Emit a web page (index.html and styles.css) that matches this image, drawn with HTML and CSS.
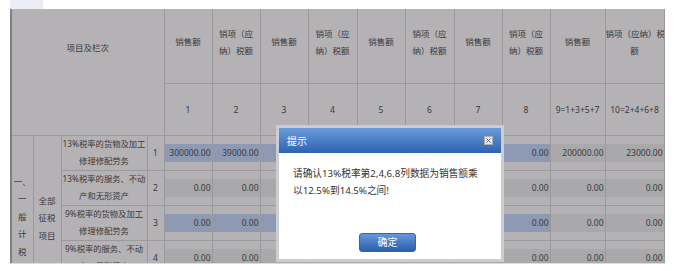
FILE: index.html
```html
<!DOCTYPE html>
<html lang="zh-CN">
<head>
<meta charset="utf-8">
<title>提示</title>
<link rel="stylesheet" href="styles.css">
</head>
<body>
<div class="tabs"><span class="tab"></span></div>
<div class="frame">
  <table class="grid">
    <colgroup>
      <col class="w-a"><col class="w-b"><col class="w-c"><col class="w-d">
      <col class="w48"><col class="w48"><col class="w48"><col class="w49">
      <col class="w48"><col class="w49"><col class="w48"><col class="w48">
      <col class="w55"><col class="w59">
    </colgroup>
    <thead>
      <tr class="hrow">
        <th colspan="4" rowspan="2" class="title-cell">项目及栏次</th>
        <th>销售额</th>
        <th>销项（应<br>纳）税额</th>
        <th>销售额</th>
        <th>销项（应<br>纳）税额</th>
        <th>销售额</th>
        <th>销项（应<br>纳）税额</th>
        <th>销售额</th>
        <th>销项（应<br>纳）税额</th>
        <th>销售额</th>
        <th>销项（应纳）税<br>额</th>
      </tr>
      <tr class="nrow">
        <td>1</td><td>2</td><td>3</td><td>4</td><td>5</td><td>6</td><td>7</td><td>8</td>
        <td>9=1+3+5+7</td><td>10=2+4+6+8</td>
      </tr>
    </thead>
    <tbody>
      <tr class="drow">
        <td rowspan="4" class="cat">一、<br>一<br>般<br>计<br>税</td>
        <td rowspan="4" class="sub">全部<br>征税<br>项目</td>
        <td class="item">13%税率的货物及加工<br>修理修配劳务</td>
        <td class="no">1</td>
        <td class="val"><div class="box blue">300000.00</div></td>
        <td class="val"><div class="box blue">39000.00</div></td>
        <td class="val"><div class="box blue"></div></td>
        <td class="val"><div class="box blue"></div></td>
        <td class="val"><div class="box blue"></div></td>
        <td class="val"><div class="box blue"></div></td>
        <td class="val"><div class="box blue"></div></td>
        <td class="val"><div class="box blue">0.00</div></td>
        <td class="val"><div class="box">200000.00</div></td>
        <td class="val"><div class="box">23000.00</div></td>
      </tr>
      <tr class="drow">
        <td class="item">13%税率的服务、不动<br>产和无形资产</td>
        <td class="no">2</td>
        <td class="val"><div class="box">0.00</div></td>
        <td class="val"><div class="box">0.00</div></td>
        <td class="val"><div class="box"></div></td>
        <td class="val"><div class="box"></div></td>
        <td class="val"><div class="box"></div></td>
        <td class="val"><div class="box"></div></td>
        <td class="val"><div class="box"></div></td>
        <td class="val"><div class="box">0.00</div></td>
        <td class="val"><div class="box">0.00</div></td>
        <td class="val"><div class="box">0.00</div></td>
      </tr>
      <tr class="drow">
        <td class="item">9%税率的货物及加工<br>修理修配劳务</td>
        <td class="no">3</td>
        <td class="val"><div class="box blue">0.00</div></td>
        <td class="val"><div class="box blue">0.00</div></td>
        <td class="val"><div class="box blue"></div></td>
        <td class="val"><div class="box blue"></div></td>
        <td class="val"><div class="box blue"></div></td>
        <td class="val"><div class="box blue"></div></td>
        <td class="val"><div class="box blue"></div></td>
        <td class="val"><div class="box blue">0.00</div></td>
        <td class="val"><div class="box">0.00</div></td>
        <td class="val"><div class="box">0.00</div></td>
      </tr>
      <tr class="drow">
        <td class="item">9%税率的服务、不动<br>产、无形资产</td>
        <td class="no">4</td>
        <td class="val"><div class="box">0.00</div></td>
        <td class="val"><div class="box">0.00</div></td>
        <td class="val"><div class="box"></div></td>
        <td class="val"><div class="box"></div></td>
        <td class="val"><div class="box"></div></td>
        <td class="val"><div class="box"></div></td>
        <td class="val"><div class="box"></div></td>
        <td class="val"><div class="box">0.00</div></td>
        <td class="val"><div class="box">0.00</div></td>
        <td class="val"><div class="box">0.00</div></td>
      </tr>
    </tbody>
  </table>

  <div class="dialog">
    <div class="dialog-title">
      <span>提示</span>
      <svg class="close" width="9" height="9" viewBox="0 0 9 9">
        <rect x="0.5" y="0.5" width="8" height="8" fill="#e4e6ea" stroke="#a9aeb8"/>
        <path d="M2.5 2.5 L6.5 6.5 M6.5 2.5 L2.5 6.5" stroke="#6b6f78" stroke-width="1"/>
      </svg>
    </div>
    <div class="dialog-body">
      <p class="msg">请确认13%税率第2,4,6.8列数据为销售额乘<br>以12.5%到14.5%之间!</p>
      <div class="footer"><button class="ok">确定</button></div>
    </div>
  </div>
</div>
</body>
</html>
```

FILE: styles.css
```css
* { box-sizing: border-box; }

body {
  margin: 0;
  background: #ffffff;
  font-family: "Noto Sans", "Noto Sans CJK SC", sans-serif;
}

.tabs {
  display: flex;
  height: 9px;
  padding-left: 10px;
}

.tab {
  width: 33px;
  background: #ececf5;
}

.frame {
  position: relative;
  width: 655px;
  height: 255px;
  margin-left: 10px;
  overflow: hidden;
  border-bottom: 1px solid #dcdcdc;
}

.grid {
  border-collapse: collapse;
  table-layout: fixed;
  width: 654px;
  background: #b4b2b4;
  color: #3a393b;
  font-size: 8.5px;
  border-left: 2px solid #807f81;
}

.w-a { width: 22px; }
.w-b { width: 28px; }
.w-c { width: 86px; }
.w-d { width: 17px; }
.w48 { width: 48px; }
.w49 { width: 49px; }
.w55 { width: 55px; }
.w59 { width: 59px; }

.grid th,
.grid td {
  border: 1px solid #9b999c;
  padding: 0;
  text-align: center;
  font-weight: normal;
  overflow: hidden;
  white-space: nowrap;
}

.hrow th {
  border-top: none;
  height: 74px;
  line-height: 17px;
  vertical-align: middle;
  padding-bottom: 8px;
}

.hrow th.title-cell {
  vertical-align: top;
  padding-top: 30px;
  padding-bottom: 0;
}

.nrow td {
  height: 52px;
  vertical-align: middle;
}

.drow td {
  height: 35px;
}

.cat,
.sub {
  vertical-align: top;
  line-height: 17.5px;
}

.cat { padding-top: 37px !important; }
.sub { padding-top: 56px !important; }

.item {
  font-size: 8.3px;
  line-height: 16.5px;
  vertical-align: middle;
}

.no { vertical-align: middle; }

.val { vertical-align: middle; }

.box {
  height: 18px;
  line-height: 18px;
  text-align: right;
  padding-right: 1px;
  background: #a9a8aa;
}

.box.blue { background: #8e99b4; }

.dialog {
  position: absolute;
  left: 266px;
  top: 116px;
  width: 228px;
  border: 3px solid #cdcdd1;
  background: #ffffff;
}

.dialog-title {
  height: 25px;
  display: flex;
  align-items: center;
  justify-content: space-between;
  padding: 0 8px;
  background: linear-gradient(#6b9bd9, #2c63b1);
  color: #ffffff;
  font-size: 10px;
}

.close { display: block; }

.dialog-body {
  height: 106px;
  display: flex;
  flex-direction: column;
  justify-content: space-between;
  padding: 12px 14px 7px;
}

.msg {
  margin: 0;
  font-size: 9.7px;
  line-height: 17px;
  color: #333333;
  white-space: nowrap;
}

.footer {
  display: flex;
  justify-content: center;
  padding-right: 5px;
}

.ok {
  width: 57px;
  height: 19px;
  padding: 0;
  border: 1px solid #3464a9;
  border-radius: 3px;
  background: linear-gradient(#6598da, #2a5fab);
  color: #ffffff;
  font-family: inherit;
  font-size: 10px;
  line-height: 17px;
}
```
